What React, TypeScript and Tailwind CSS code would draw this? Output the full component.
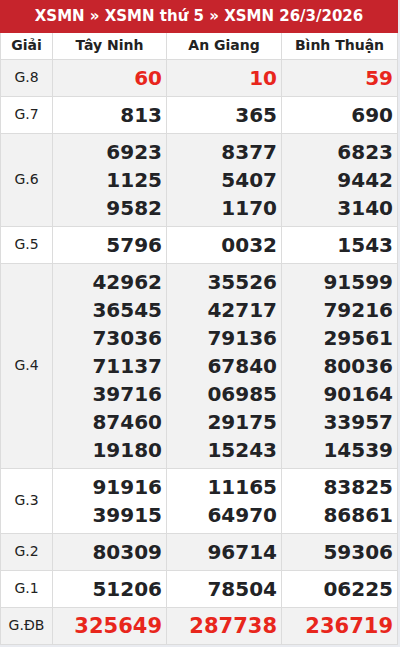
const PROVINCES = ['Tây Ninh', 'An Giang', 'Bình Thuận']

/* ─── Result Data ─── */

const ROWS: { label: string; values: string[][]; red?: boolean; big?: boolean }[] = [
  { label: 'G.8', values: [['60'], ['10'], ['59']], red: true },
  { label: 'G.7', values: [['813'], ['365'], ['690']] },
  { label: 'G.6', values: [['6923', '1125', '9582'], ['8377', '5407', '1170'], ['6823', '9442', '3140']] },
  { label: 'G.5', values: [['5796'], ['0032'], ['1543']] },
  {
    label: 'G.4',
    values: [
      ['42962', '36545', '73036', '71137', '39716', '87460', '19180'],
      ['35526', '42717', '79136', '67840', '06985', '29175', '15243'],
      ['91599', '79216', '29561', '80036', '90164', '33957', '14539'],
    ],
  },
  { label: 'G.3', values: [['91916', '39915'], ['11165', '64970'], ['83825', '86861']] },
  { label: 'G.2', values: [['80309'], ['96714'], ['59306']] },
  { label: 'G.1', values: [['51206'], ['78504'], ['06225']] },
  { label: 'G.ĐB', values: [['325649'], ['287738'], ['236719']], red: true, big: true },
]

export default function App() {
  return (
    <div className="w-[400px] h-[647px] bg-[#e9ebf0] font-['DejaVu_Sans',sans-serif]">
      <div className="w-[398px] bg-white">
        <div className="h-[33px] bg-[#c6242c] text-white text-[15px] font-bold flex items-center justify-center">
          XSMN » XSMN thứ 5 » XSMN 26/3/2026
        </div>
        <table className="w-full border-collapse table-fixed border border-[#dcdcdc] border-t-0">
          <colgroup>
            <col className="w-[52px]" />
            <col className="w-[114px]" />
            <col className="w-[115px]" />
            <col />
          </colgroup>
          <thead>
            <tr className="h-[26px]">
              <th className="border border-[#dcdcdc] border-t-0 text-[14px] font-bold text-[#222] text-center">Giải</th>
              {PROVINCES.map((p) => (
                <th key={p} className="border border-[#dcdcdc] border-t-0 text-[14px] font-bold text-[#222] text-center">
                  {p}
                </th>
              ))}
            </tr>
          </thead>
          <tbody>
            {ROWS.map((row, i) => (
              <tr key={row.label} className={i % 2 === 0 ? 'bg-[#f2f2f2]' : 'bg-white'}>
                <td className="border border-[#dcdcdc] text-[14px] text-[#222] text-center align-middle">{row.label}</td>
                {row.values.map((nums, j) => (
                  <td key={j} className="border border-[#dcdcdc] py-1 pr-1 text-right align-middle">
                    {nums.map((n) => (
                      <div
                        key={n}
                        className={`leading-[28px] font-bold ${row.big ? 'text-[21px]' : 'text-[20px]'} ${
                          row.red ? 'text-[#e8261c]' : 'text-[#222326]'
                        }`}
                      >
                        {n}
                      </div>
                    ))}
                  </td>
                ))}
              </tr>
            ))}
          </tbody>
        </table>
      </div>
    </div>
  )
}
